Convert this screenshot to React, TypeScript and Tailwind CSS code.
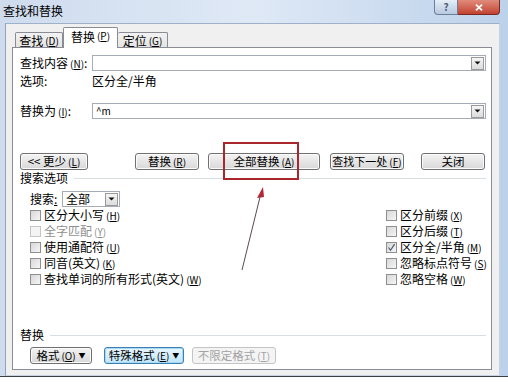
import type { ReactNode } from 'react';

const FONT = "font-['Noto_Sans_CJK_SC','Noto_Sans','DejaVu_Sans',sans-serif]";

function Btn({
  children,
  className = '',
  disabled = false,
  focused = false,
}: {
  children: ReactNode;
  className?: string;
  disabled?: boolean;
  focused?: boolean;
}) {
  const tone = disabled
    ? 'border-[#c4c4c4] text-[#a3a3a3] bg-[#f4f4f4]'
    : focused
      ? 'border-[#3c7fb1] text-black bg-gradient-to-b from-[#eaf6fd] to-[#bee6fd] shadow-[inset_0_0_0_1px_#a7d9f5]'
      : 'border-[#707070] text-black bg-gradient-to-b from-[#f4f4f4] to-[#d8d8d8] shadow-[inset_0_0_0_1px_#fbfbfb]';
  return (
    <div
      className={`flex h-[17px] items-center justify-center whitespace-nowrap rounded-[3px] border text-[11.5px] leading-none ${tone} ${className}`}
    >
      {children}
    </div>
  );
}

function Key({ k }: { k: string }) {
  return (
    <span className="ml-[2px] text-[10px]">
      (<span className="underline underline-offset-1">{k}</span>)
    </span>
  );
}

function Check({ label, k, checked = false, disabled = false }: { label: string; k: string; checked?: boolean; disabled?: boolean }) {
  return (
    <div className="flex h-[16px] items-center">
      <div
        className={`relative mr-[3px] h-[11px] w-[11px] border ${disabled ? 'border-[#c6c6c6] bg-[#f4f4f4]' : 'border-[#8e8f8f] bg-gradient-to-br from-[#d7d7d7] to-[#f6f6f6]'}`}
      >
        {checked && (
          <svg viewBox="0 0 11 11" className="absolute -left-px -top-px h-[11px] w-[11px]">
            <path d="M2.5 5.5 L4.5 8.3 L8.6 2.2" fill="none" stroke="#4a5c74" strokeWidth="1.2" />
          </svg>
        )}
      </div>
      <span className={`whitespace-nowrap text-[12px] leading-none ${disabled ? 'text-[#8f8f8f]' : 'text-black'}`}>
        {label}
        <Key k={k} />
      </span>
    </div>
  );
}

function DropBtn({ className = '' }: { className?: string }) {
  return (
    <div
      className={`flex h-[13px] w-[13px] items-center justify-center border border-[#9a9a9a] bg-gradient-to-b from-[#f6f6f6] to-[#dcdcdc] ${className}`}
    >
      <svg viewBox="0 0 7 4" className="h-[4px] w-[7px]">
        <path d="M0.5 0.5 H6.5 L3.5 3.5 Z" fill="#111" />
      </svg>
    </div>
  );
}

function TextField({ value }: { value?: string }) {
  return (
    <div className="flex h-[16px] w-[394px] items-center border border-[#a5acb5] bg-white pl-[3px] pr-[1px]">
      <span className="flex-1 text-[10px] leading-none text-black">{value}</span>
      <DropBtn />
    </div>
  );
}

function Group({ title }: { title: string }) {
  return (
    <div className="flex h-[14px] items-center pl-[7px] pr-[5px]">
      <span className="text-[12px] leading-none text-black">{title}</span>
      <div className="ml-[6px] h-px flex-1 bg-[#d5dfe5]" />
    </div>
  );
}

export default function App() {
  return (
    <div className={`relative h-[386px] w-[508px] overflow-hidden bg-white ${FONT}`}>
      <div className="flex h-[377px] w-[508px] flex-col border-b border-[#3a3f47] bg-gradient-to-r from-[#cfdcee] via-[#dfe9f6] to-[#bcd1ea]">
        {/* title bar */}
        <div className="flex h-[23px] items-start">
          <span className="pl-[3px] pt-[5px] text-[12px] leading-none text-black">查找和替换</span>
          <div className="ml-auto mr-[8px] flex">
            <div className="flex h-[15px] w-[24px] items-center justify-center rounded-bl-[4px] border border-t-0 border-[#6d7f98] bg-gradient-to-b from-[#e6eef8] to-[#b7c9e0] text-[10px] font-bold leading-none text-[#4b5d75]">
              ?
            </div>
            <div className="flex h-[15px] w-[42px] items-center justify-center rounded-br-[4px] border border-l-0 border-t-0 border-[#7a2a22] bg-gradient-to-b from-[#e08b7c] to-[#c2412f]">
              <svg viewBox="0 0 10 8" className="h-[7px] w-[10px]">
                <path d="M1.5 0.8 L8.5 7.2 M8.5 0.8 L1.5 7.2" stroke="#fff" strokeWidth="2" />
              </svg>
            </div>
          </div>
        </div>

        {/* client area */}
        <div className="ml-[5px] mr-[8px] flex flex-1 flex-col border border-t-[#9fb1c8] border-l-[#8fa3bd] border-r-[#c7d3e1] border-b-[#c7d3e1] bg-[#f0f0f0] pb-[5px] pl-[6px] pr-[7px]">
          {/* tabs */}
          <div className="flex h-[23px] items-end pl-[3px]">
            <div className="mb-[-1px] flex h-[16px] w-[48px] items-center justify-center rounded-t-[2px] border border-b-0 border-[#898c95] bg-gradient-to-b from-[#f2f2f2] to-[#e3e3e3] text-[12px] leading-none">
              查找<Key k="D" />
            </div>
            <div className="relative z-10 mb-[-1px] flex h-[21px] w-[55px] items-start justify-center rounded-t-[2px] border border-b-0 border-[#898c95] bg-white pt-[3px] text-[12px] leading-none">
              替换<Key k="P" />
            </div>
            <div className="mb-[-1px] flex h-[16px] w-[50px] items-center justify-center rounded-t-[2px] border border-b-0 border-l-0 border-[#898c95] bg-gradient-to-b from-[#f2f2f2] to-[#e3e3e3] text-[12px] leading-none">
              定位<Key k="G" />
            </div>
          </div>

          {/* tab panel */}
          <div className="flex flex-1 flex-col border border-[#898c95] bg-white pt-[7px]">
            <div className="flex h-[16px] items-center pl-[7px]">
              <span className="w-[72px] text-[12px] leading-none">
                查找内容<Key k="N" />:
              </span>
              <TextField />
            </div>
            <div className="mt-[2px] flex h-[16px] items-center pl-[7px]">
              <span className="w-[72px] text-[12px] leading-none">选项:</span>
              <span className="text-[12px] leading-none">区分全/半角</span>
            </div>
            <div className="mt-[14px] flex h-[16px] items-center pl-[7px]">
              <span className="w-[72px] text-[12px] leading-none">
                替换为<Key k="I" />:
              </span>
              <TextField value="^m" />
            </div>

            <div className="mt-[34px] flex items-center pl-[7px]">
              <Btn className="w-[68px]">
                &lt;&lt; 更少<Key k="L" />
              </Btn>
              <Btn className="ml-[47px] w-[64px]">
                替换<Key k="R" />
              </Btn>
              <Btn className="ml-[9px] w-[112px]">
                全部替换<Key k="A" />
              </Btn>
              <Btn className="ml-[10px] w-[74px] text-[11px]">
                查找下一处<Key k="F" />
              </Btn>
              <Btn className="ml-[17px] w-[64px]">关闭</Btn>
            </div>

            <div className="mt-px">
              <Group title="搜索选项" />
            </div>

            <div className="mt-[6px] flex h-[16px] items-center pl-[17px]">
              <span className="w-[32px] text-[12px] leading-none">
                搜索<span className="underline">:</span>
              </span>
              <div className="flex h-[16px] w-[58px] items-center border border-[#a5acb5] bg-white pl-[3px] pr-px">
                <span className="flex-1 text-[12px] leading-none">全部</span>
                <DropBtn />
              </div>
            </div>

            <div className="flex pl-[17px]">
              <div className="flex w-[356px] flex-col">
                <Check label="区分大小写" k="H" />
                <Check label="全字匹配" k="Y" disabled />
                <Check label="使用通配符" k="U" />
                <Check label="同音(英文)" k="K" />
                <Check label="查找单词的所有形式(英文)" k="W" />
              </div>
              <div className="flex flex-col">
                <Check label="区分前缀" k="X" />
                <Check label="区分后缀" k="T" />
                <Check label="区分全/半角" k="M" checked />
                <Check label="忽略标点符号" k="S" />
                <Check label="忽略空格" k="W" />
              </div>
            </div>

            <div className="mt-[41px]">
              <Group title="替换" />
            </div>

            <div className="mt-[5px] flex items-center pl-[17px]">
              <Btn className="w-[62px]">
                格式<Key k="O" />
                <span className="ml-[3px] text-[7px]">▼</span>
              </Btn>
              <Btn focused className="ml-[12px] w-[80px]">
                特殊格式<Key k="E" />
                <span className="ml-[3px] text-[7px]">▼</span>
              </Btn>
              <Btn disabled className="ml-[8px] w-[84px]">
                不限定格式<Key k="T" />
              </Btn>
            </div>
          </div>
        </div>
      </div>

      {/* annotation: red box and arrow */}
      <div className="absolute left-[223px] top-[142px] h-[38px] w-[76px] border-2 border-[#a8262c]" />
      <svg className="absolute left-0 top-0 h-[386px] w-[508px]" viewBox="0 0 508 386">
        <line x1="242" y1="270" x2="260" y2="197" stroke="#5b4a4e" strokeWidth="1" />
        <path d="M263 187 L257 198 L264 197 Z" fill="#b02a36" />
      </svg>
    </div>
  );
}
